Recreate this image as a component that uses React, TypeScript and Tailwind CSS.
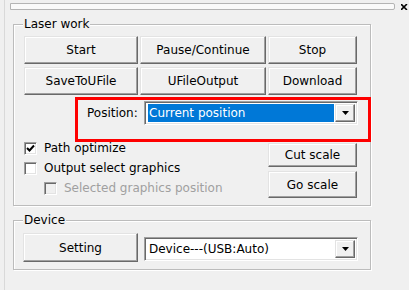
import React from "react";

const raised =
  "flex items-center justify-center bg-[#f0f0f0] border border-t-[#e3e3e3] border-l-[#e3e3e3] border-r-[#696969] border-b-[#696969] shadow-[inset_-1px_-1px_0_#a0a0a0,inset_1px_1px_0_#ffffff] text-black";
const sunken =
  "border border-t-[#a0a0a0] border-l-[#a0a0a0] border-r-white border-b-white shadow-[inset_1px_1px_0_#696969,inset_-1px_-1px_0_#e3e3e3]";

function Btn({ label, className = "" }: { label: string; className?: string }) {
  return <div className={`${raised} ${className}`}>{label}</div>;
}

function Arrow() {
  return (
    <svg width="7" height="4" viewBox="0 0 7 4">
      <path d="M0 0H7L3.5 4Z" fill="#000" />
    </svg>
  );
}

function Combo({ text, selected }: { text: string; selected?: boolean }) {
  return (
    <div className={`${sunken} bg-white w-[214px] h-[24px] flex items-stretch p-[2px]`}>
      <div className="flex-1 flex items-center pl-[1px] pr-[1px]">
        <div
          className={`h-[18px] flex-1 flex items-center pl-[1px] ${
            selected ? "bg-[#0078d7] text-white" : "text-black"
          }`}
        >
          {text}
        </div>
      </div>
      <div className={`${raised} w-[20px]`}>
        <Arrow />
      </div>
    </div>
  );
}

function Check({ checked, disabled, label }: { checked?: boolean; disabled?: boolean; label: string }) {
  return (
    <div className="flex items-center h-[20px] gap-[7px]">
      <div
        className={`${sunken} w-[13px] h-[13px] flex items-center justify-center ${
          disabled ? "bg-[#f0f0f0]" : "bg-white"
        }`}
      >
        {checked && (
          <svg width="9" height="9" viewBox="0 0 9 9">
            <path d="M1 4L3.5 6.5L8 1.5" stroke="#000" strokeWidth="2" fill="none" />
          </svg>
        )}
      </div>
      <span className={disabled ? "text-[#a0a0a0]" : "text-black"}>{label}</span>
    </div>
  );
}

function Group({
  label,
  className = "",
  children,
}: {
  label: string;
  className?: string;
  children: React.ReactNode;
}) {
  return (
    <div
      className={`relative border border-[#bcbcbc] shadow-[inset_1px_1px_0_#ffffff,1px_1px_0_#ffffff] ${className}`}
    >
      <div className="absolute left-[9px] top-[-8px] px-[1px] bg-[#f0f0f0] leading-[15px] text-black">
        {label}
      </div>
      {children}
    </div>
  );
}

export default function App() {
  return (
    <div
      className="relative w-[409px] h-[290px] bg-[#f0f0f0] overflow-hidden text-[12px] leading-[14px]"
      style={{ fontFamily: '"DejaVu Sans", sans-serif' }}
    >
      <div className="ml-[4px] h-full border-l border-[#d9d9d9] pl-[5px]">
        <div className="flex items-start pt-[3px]">
          <div className="w-[388px] h-[7px] border border-[#b4b4b4] bg-[#fafafa] rounded-r-[2px]" />
          <svg className="ml-[6px] mt-[1px]" width="8" height="6" viewBox="0 0 8 6">
            <path d="M0 0L6 6M6 0L0 6" stroke="#000" strokeWidth="1.6" />
          </svg>
        </div>

        <Group label="Laser work" className="ml-[3px] mt-[14px] w-[358px] h-[182px] pl-[10px] pt-[11px]">
          <div className="grid grid-cols-[114px_126px_89px] grid-rows-[28px_28px] gap-x-[2px] gap-y-[3px]">
            <Btn label="Start" />
            <Btn label="Pause/Continue" />
            <Btn label="Stop" />
            <Btn label="SaveToUFile" />
            <Btn label="UFileOutput" />
            <Btn label="Download" />
          </div>

          <div className="flex items-center mt-[6px]">
            <span className="ml-[63px] w-[57px] text-black">Position:</span>
            <Combo text="Current position" selected />
          </div>

          <div className="flex mt-[13px]">
            <div className="flex flex-col w-[244px]">
              <Check checked label="Path optimize" />
              <Check label="Output select graphics" />
              <div className="pl-[20px]">
                <Check disabled label="Selected graphics position" />
              </div>
            </div>
            <div className="flex flex-col gap-[4px] mt-[5px]">
              <Btn label="Cut scale" className="w-[89px] h-[24px]" />
              <Btn label="Go scale" className="w-[89px] h-[27px]" />
            </div>
          </div>

          <div className="absolute left-[61px] top-[72px] w-[296px] h-[45px] border-[3px] border-[#fe0000]" />
        </Group>

        <Group label="Device" className="ml-[3px] mt-[14px] w-[358px] h-[50px] pl-[9px] pt-[12px]">
          <div className="flex items-start gap-[6px]">
            <Btn label="Setting" className="w-[115px] h-[29px]" />
            <div className="mt-[4px]">
              <Combo text="Device---(USB:Auto)" />
            </div>
          </div>
        </Group>
      </div>
    </div>
  );
}
